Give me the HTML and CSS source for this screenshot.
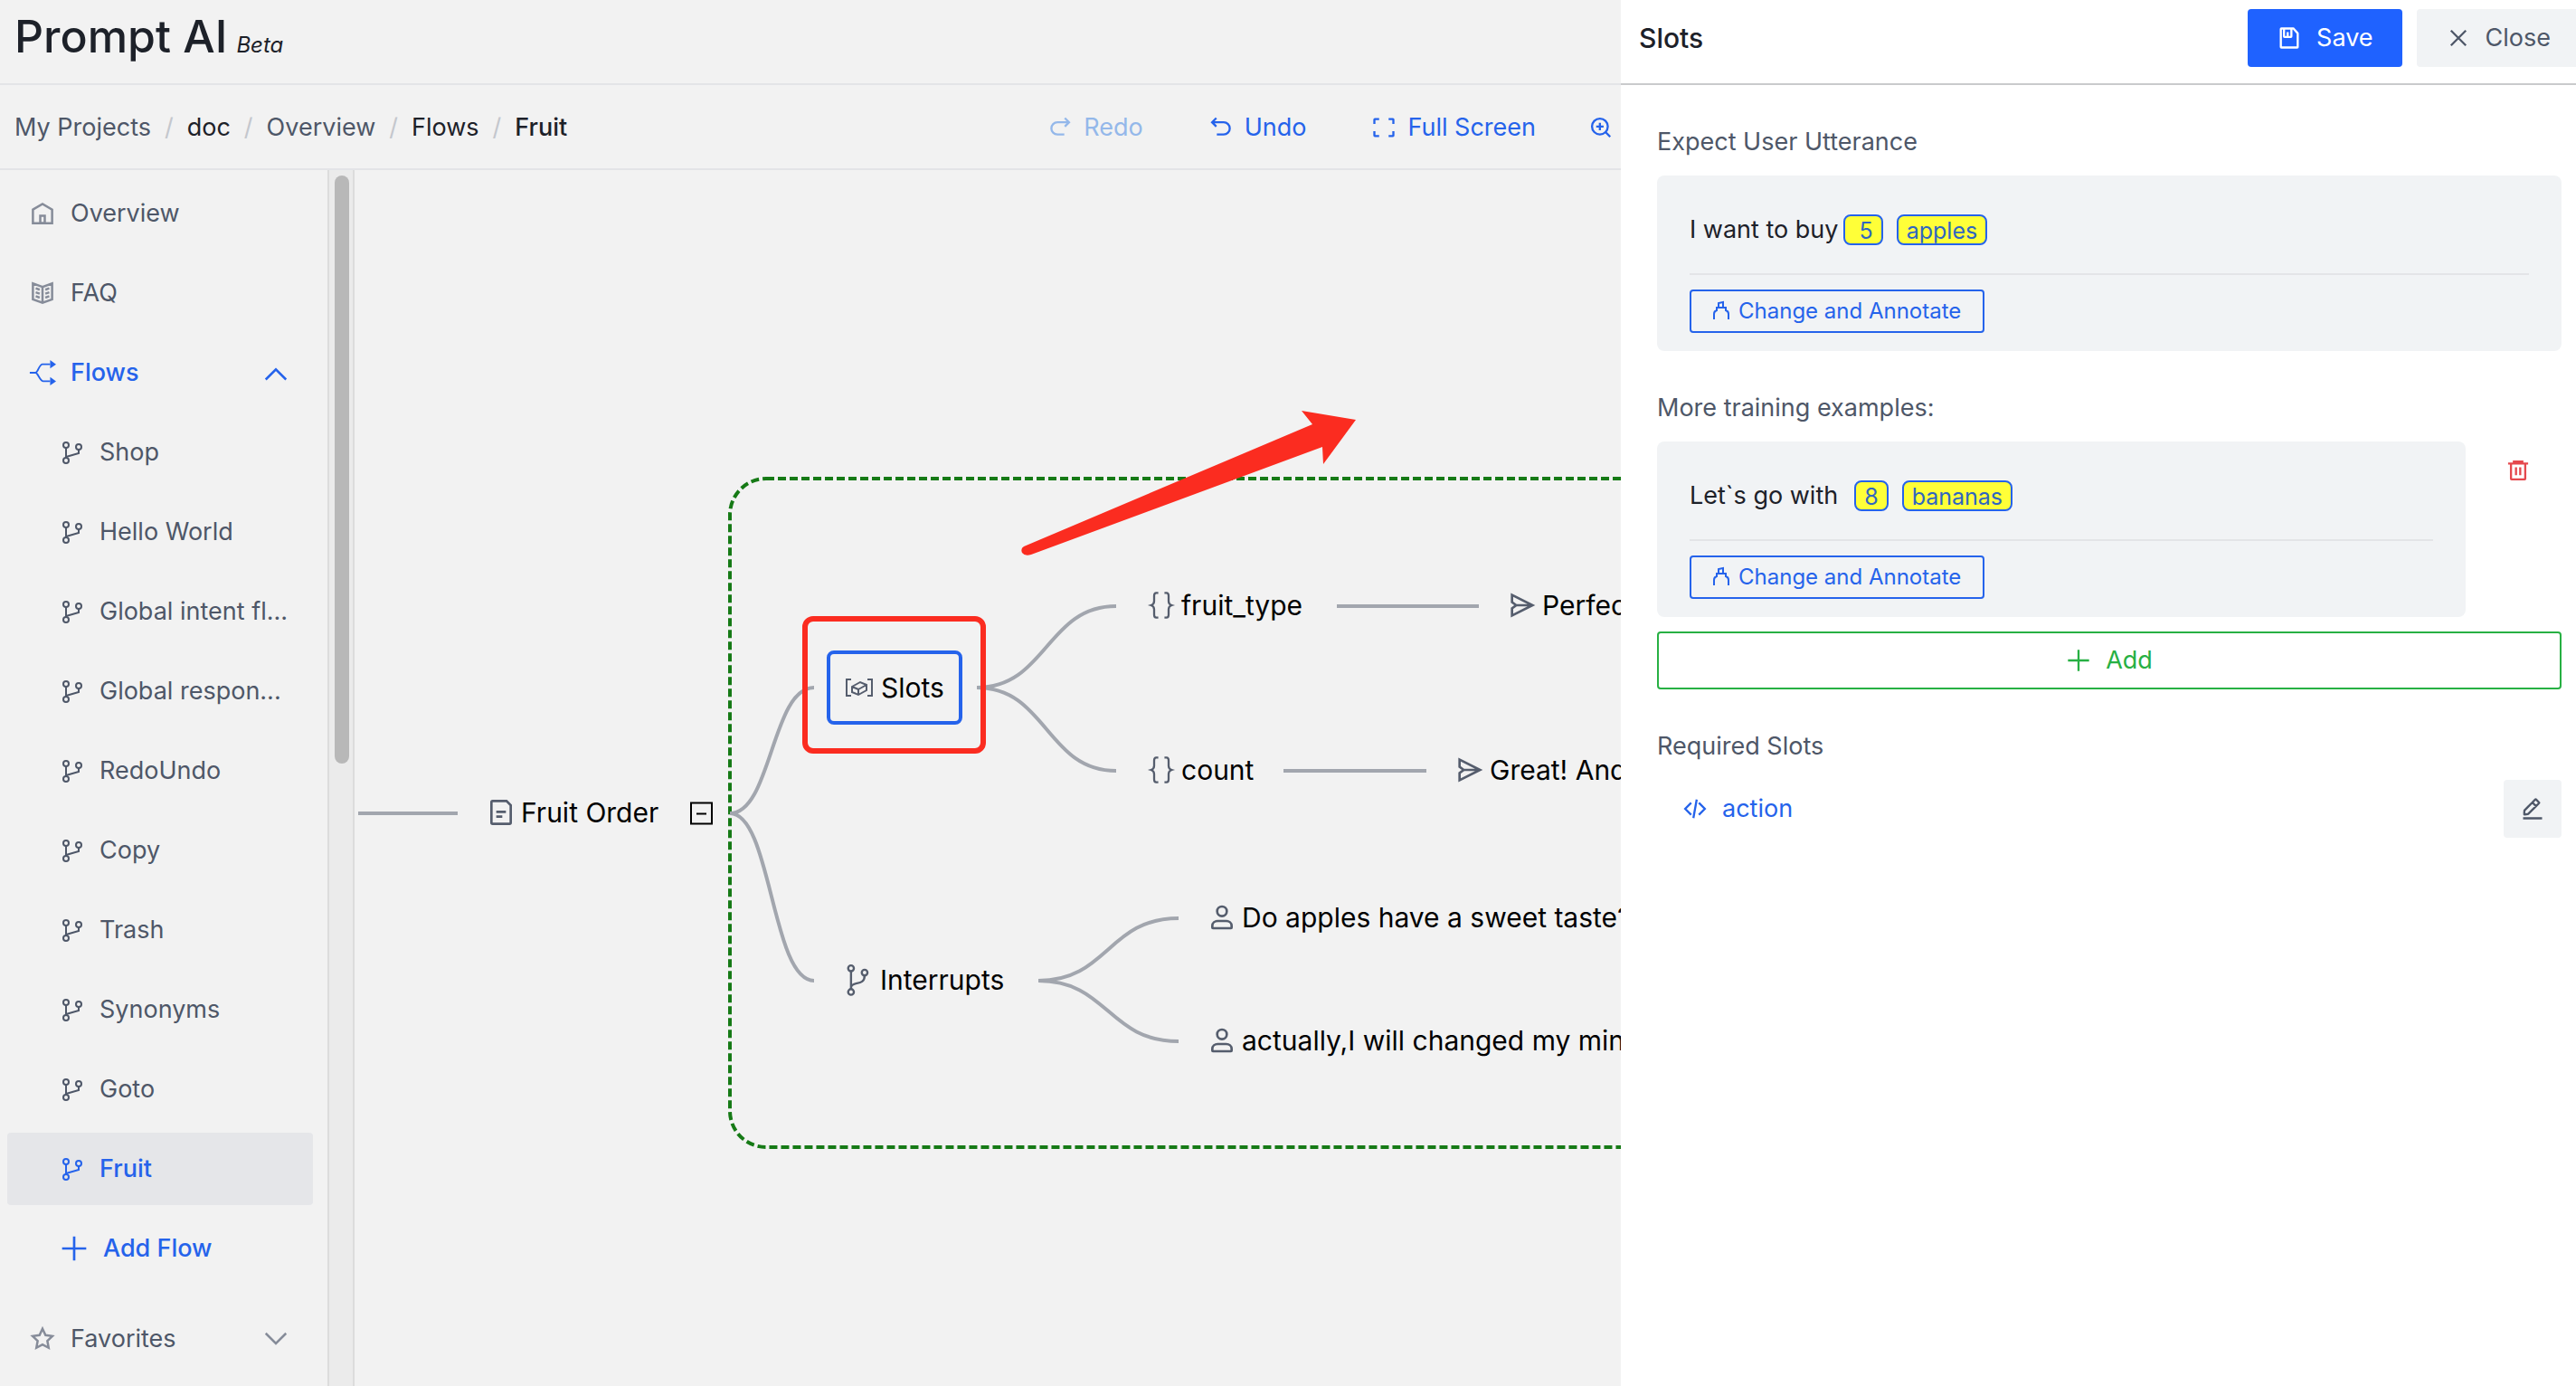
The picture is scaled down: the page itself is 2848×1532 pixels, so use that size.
FILE: index.html
```html
<!DOCTYPE html>
<html lang="en">
<head>
<meta charset="utf-8">
<meta name="viewport" content="width=device-width, initial-scale=1">
<title>Prompt AI</title>
<link rel="stylesheet" href="styles.css">
</head>
<body>
<svg class="sprite" aria-hidden="true">
  <symbol id="home" viewBox="0 0 48 48"><path d="M7 17 24 7l17 10v24H7V17Z"/><path d="M20 28h8v13h-8V28Z"/></symbol>
  <symbol id="book" viewBox="0 0 48 48"><path d="M24 13 7 7v28l17 6 17-6V7l-17 6Zm0 0v27.5M29 18l7-2.5M29 25l7-2.5M29 32l7-2.5M19 18l-7-2.5m7 9.5-7-2.5m7 9.5-7-2.5"/></symbol>
  <symbol id="split" viewBox="0 0 32 32"><path class="thin" d="M1 16h7M8 16C11 15 12 6 16 6h9M8 16c3 1 5 10 9 10h8"/><path class="solid" d="M25 1l7 5-7 5zM25 21l7 5-7 5z"/></symbol>
  <symbol id="branch" viewBox="0 0 28 28"><g class="two"><circle cx="7" cy="6" r="3"/><circle cx="21" cy="8" r="3"/><circle cx="7" cy="23" r="3"/><path d="M7 9v11M21 11v4L7 19"/></g></symbol>
  <symbol id="fork" viewBox="0 0 48 48"><g class="three"><circle cx="15" cy="8" r="4"/><circle cx="34" cy="14" r="4"/><circle cx="15" cy="41" r="4"/><path d="M15 12v25M34 18c0 9-6 10-11 11-5 1-8 3-8 6"/></g></symbol>
  <symbol id="plus" viewBox="0 0 48 48"><path d="M4 24h40M24 4v40"/></symbol>
  <symbol id="star" viewBox="0 0 48 48"><path d="M24 6l5.3 11.2 12.2 1.7-8.9 8.5 2.2 12.2L24 33.7l-10.8 5.9 2.2-12.2-8.9-8.5 12.2-1.7L24 6Z"/></symbol>
  <symbol id="down" viewBox="0 0 48 48"><path d="M42 14 24 32 6 14"/></symbol>
  <symbol id="up" viewBox="0 0 48 48"><path d="M42 36 24 18 6 36"/></symbol>
  <symbol id="undo" viewBox="0 0 48 48"><path d="m15 6-8 8 8 8M8 14h21a11 11 0 0 1 0 23H16"/></symbol>
  <symbol id="redo" viewBox="0 0 48 48"><path d="m33 6 8 8-8 8M40 14H19a11 11 0 0 0 0 23h13"/></symbol>
  <symbol id="full" viewBox="0 0 48 48"><path d="M42 17V9a1 1 0 0 0-1-1h-8M6 17V9a1 1 0 0 1 1-1h8m27 23v8a1 1 0 0 1-1 1h-8M6 31v8a1 1 0 0 0 1 1h8"/></symbol>
  <symbol id="zoomin" viewBox="0 0 48 48"><circle cx="22" cy="22" r="15"/><path d="m32.6 32.6 8.9 8.9M29 22H15m7 7V15"/></symbol>
  <symbol id="save" viewBox="0 0 48 48"><path d="M21 13v9m18 20H9a1 1 0 0 1-1-1V7a1 1 0 0 1 1-1h22.5a1 1 0 0 1 .8.3l7.4 8.4a1 1 0 0 1 .3.7V41a1 1 0 0 1-1 1ZM14 6h14v15a1 1 0 0 1-1 1H15a1 1 0 0 1-1-1V6Z"/></symbol>
  <symbol id="close" viewBox="0 0 48 48"><path d="m9.9 9.9 28.2 28.2M38.1 9.9 9.9 38.1"/></symbol>
  <symbol id="trash" viewBox="0 0 48 48"><path d="M5 11h38M10.500 11v29a1 1 0 0 0 1 1h25a1 1 0 0 0 1-1V11M16 11V7h16v4M20 18v15m8-15v15"/></symbol>
  <symbol id="edit" viewBox="0 0 48 48"><path d="m30.480 19 5.700-5.700a1 1 0 0 0 0-1.400l-5.600-5.600a1 1 0 0 0-1.400 0l-5.700 5.700m7 7L15.760 33.750a1 1 0 0 1-.6.3l-6 .7a1 1 0 0 1-1.100-1.100l.5-6.300a1 1 0 0 1 .3-.6l14.700-14.700m7 7-7-7M6 42h36"/></symbol>
  <symbol id="code" viewBox="0 0 48 48"><path d="M16.700 12.700 5.400 24l11.300 11.300m14.600-22.600L42.600 24 31.300 35.300M27.200 6.300l-6.300 35.400"/></symbol>
  <symbol id="send" viewBox="0 0 48 48"><path d="m14 24-7-5V7l34 17L7 41V29l7-5Zm0 0h25"/></symbol>
  <symbol id="user" viewBox="0 0 48 48"><circle cx="24" cy="14" r="8"/><path d="M8 38c0-5 4-8 9-8h14c5 0 9 3 9 8v3a1 1 0 0 1-1 1H9a1 1 0 0 1-1-1v-3Z"/></symbol>
  <symbol id="file" viewBox="0 0 48 48"><path d="M16 23h16m-16 8h10m12 12H10a2 2 0 0 1-2-2V7a2 2 0 0 1 2-2h23l7 7v29a2 2 0 0 1-2 2Z"/></symbol>
  <symbol id="braces" viewBox="0 0 28 28"><path class="two" d="M11 2H9Q7 2 7 5v5q0 3-3 4 3 1 3 4v5q0 3 2 3h2M17 2h2q2 0 2 3v5q0 3 3 4-3 1-3 4v5q0 3-2 3h-2"/></symbol>
  <symbol id="slot" viewBox="0 0 32 24"><path class="two" d="M7 3H2v18h5M25 3h5v18h-5M8 11l9-5 7 3v6l-9 5-7-3v-6ZM8 11l7 3v6M15 14l9-5"/></symbol>
  <symbol id="pen" viewBox="0 0 18 24"><path class="two" d="M1 21v-6q0-3 3-4V8h10v3q3 1 3 4v6M6 8V3l5-1v6"/></symbol>
</svg>

<div class="app">
  <div class="workspace">
    <header class="brand">
      <h1 class="brand-name">Prompt AI</h1>
      <em class="brand-tag">Beta</em>
    </header>

    <div class="topbar">
      <nav class="crumbs" aria-label="Breadcrumb">
        <a href="#projects">My Projects</a><span class="slash">/</span>
        <a class="dark" href="#doc">doc</a><span class="slash">/</span>
        <a href="#overview">Overview</a><span class="slash">/</span>
        <a class="dark" href="#flows">Flows</a><span class="slash">/</span>
        <span class="current">Fruit</span>
      </nav>
      <div class="tools">
        <button class="tool" disabled><svg class="icon s28"><use href="#redo"/></svg>Redo</button>
        <button class="tool"><svg class="icon s28"><use href="#undo"/></svg>Undo</button>
        <button class="tool"><svg class="icon s28"><use href="#full"/></svg>Full Screen</button>
        <button class="tool" aria-label="Zoom in"><svg class="icon s28"><use href="#zoomin"/></svg></button>
      </div>
    </div>

    <div class="main">
      <nav class="sidebar" aria-label="Project">
        <a class="item" href="#overview"><svg class="icon s30"><use href="#home"/></svg>Overview</a>
        <a class="item" href="#faq"><svg class="icon s30"><use href="#book"/></svg>FAQ</a>
        <button class="item active"><svg class="icon s30"><use href="#split"/></svg>Flows<svg class="icon s30 chevron"><use href="#up"/></svg></button>
        <a class="item sub" href="#shop"><svg class="icon s28"><use href="#branch"/></svg>Shop</a>
        <a class="item sub" href="#hello"><svg class="icon s28"><use href="#branch"/></svg>Hello World</a>
        <a class="item sub" href="#intent"><svg class="icon s28"><use href="#branch"/></svg>Global intent fl...</a>
        <a class="item sub" href="#response"><svg class="icon s28"><use href="#branch"/></svg>Global respon...</a>
        <a class="item sub" href="#redoundo"><svg class="icon s28"><use href="#branch"/></svg>RedoUndo</a>
        <a class="item sub" href="#copy"><svg class="icon s28"><use href="#branch"/></svg>Copy</a>
        <a class="item sub" href="#trash-flow"><svg class="icon s28"><use href="#branch"/></svg>Trash</a>
        <a class="item sub" href="#synonyms"><svg class="icon s28"><use href="#branch"/></svg>Synonyms</a>
        <a class="item sub" href="#goto"><svg class="icon s28"><use href="#branch"/></svg>Goto</a>
        <a class="item sub active selected" href="#fruit" aria-current="page"><svg class="icon s28"><use href="#branch"/></svg>Fruit</a>
        <button class="item sub active"><svg class="icon s32"><use href="#plus"/></svg>Add Flow</button>
        <button class="item favorites"><svg class="icon s30"><use href="#star"/></svg>Favorites<svg class="icon s30 chevron"><use href="#down"/></svg></button>
      </nav>
      <div class="track" aria-hidden="true"><div class="thumb"></div></div>

      <main class="canvas">
        <svg class="links" aria-hidden="true">
          <rect class="group" x="415" y="341" width="1800" height="739" rx="40"/>
          <g class="link">
            <path d="M4 711H114"/>
            <path d="M415 711C461 711 461 572 508 572"/>
            <path d="M415 711C461 711 461 896 508 896"/>
            <path d="M688 572C765 572 765 482 842 482"/>
            <path d="M688 572C765 572 765 664 842 664"/>
            <path d="M1086 482H1243"/>
            <path d="M1027 664H1185"/>
            <path d="M756 896C833 896 833 827 911 827"/>
            <path d="M756 896C833 896 833 963 911 963"/>
          </g>
        </svg>
        <div class="node" style="left:146px;top:710px"><svg class="icon s32"><use href="#file"/></svg>Fruit Order</div>
        <button class="toggle" style="left:371px;top:711px" aria-label="Collapse"></button>
        <div class="node picked" style="left:522px;top:572px"><svg class="icon s32"><use href="#slot"/></svg>Slots</div>
        <div class="node" style="left:876px;top:481px"><svg class="icon s32"><use href="#braces"/></svg>fruit_type</div>
        <div class="node" style="left:876px;top:663px"><svg class="icon s32"><use href="#braces"/></svg>count</div>
        <div class="node" style="left:1275px;top:481px"><svg class="icon s32"><use href="#send"/></svg>Perfect!</div>
        <div class="node" style="left:1217px;top:663px"><svg class="icon s32"><use href="#send"/></svg>Great! And</div>
        <div class="node" style="left:537px;top:895px"><svg class="icon s38"><use href="#fork"/></svg>Interrupts</div>
        <div class="node" style="left:943px;top:826px"><svg class="icon s32"><use href="#user"/></svg>Do apples have a sweet taste?</div>
        <div class="node" style="left:943px;top:962px"><svg class="icon s32"><use href="#user"/></svg>actually,I will changed my mind</div>
        <svg class="links marks" aria-hidden="true">
          <rect class="mark-box" x="498" y="496" width="197" height="146" rx="9"/>
          <path class="mark-arrow" d="M740 416 1059 281 1047 266 1107 276 1071 325 1070 306 748 425Q741 427 738 423 736 418 740 416Z"/>
        </svg>
      </main>
    </div>
  </div>

  <aside class="drawer" aria-label="Slots">
    <header class="drawer-head">
      <h2 class="drawer-title">Slots</h2>
      <button class="btn primary"><svg class="icon s28"><use href="#save"/></svg>Save</button>
      <button class="btn plain"><svg class="icon s28"><use href="#close"/></svg>Close</button>
    </header>
    <div class="drawer-body">
      <h3 class="field">Expect User Utterance</h3>
      <section class="card">
        <p class="utterance">I want to buy<mark class="lead">5</mark><mark>apples</mark></p>
        <button class="annotate"><svg class="icon pen"><use href="#pen"/></svg>Change and Annotate</button>
      </section>

      <h3 class="field">More training examples:</h3>
      <div class="example">
        <section class="card">
          <p class="utterance">Let`s go with<mark class="apart">8</mark><mark>bananas</mark></p>
          <button class="annotate"><svg class="icon pen"><use href="#pen"/></svg>Change and Annotate</button>
        </section>
        <button class="remove" aria-label="Delete example"><svg class="icon s28"><use href="#trash"/></svg></button>
      </div>
      <button class="add"><svg class="icon s28"><use href="#plus"/></svg>Add</button>

      <h3 class="field">Required Slots</h3>
      <div class="slot-row">
        <a class="slot-link" href="#action"><svg class="icon s28"><use href="#code"/></svg>action</a>
        <button class="edit" aria-label="Edit slots"><svg class="icon s28"><use href="#edit"/></svg></button>
      </div>
    </div>
  </aside>
</div>
</body>
</html>
```
FILE: styles.css
```css
:root {
  --blue: #2563eb;
  --gray: #4e5768;
  --line: #e3e4e7;
}

* { box-sizing: border-box; }

body {
  margin: 0;
  background: #f2f2f2;
  color: #1d2129;
  font: 27px/40px Inter, "Liberation Sans", sans-serif;
}

h1, h2, h3, p { margin: 0; font-weight: 400; }
a { color: inherit; text-decoration: none; }
button {
  margin: 0;
  padding: 0;
  border: 0;
  background: none;
  color: inherit;
  font: inherit;
  cursor: pointer;
}

.sprite { position: absolute; width: 0; height: 0; }
.icon { flex: none; fill: none; stroke: currentColor; stroke-width: 4; }
.s28 { width: 28px; height: 28px; }
.s30 { width: 30px; height: 30px; }
.s32 { width: 32px; height: 32px; }
.s38 { width: 38px; height: 38px; }
.thin { stroke-width: 2; }
.two { stroke-width: 2; }
.three { stroke-width: 3; }
.solid { fill: currentColor; stroke: none; }

.app { display: flex; min-height: 100vh; }
.workspace { flex: 1; min-width: 0; display: flex; flex-direction: column; }

/* Brand and breadcrumb bars */
.brand {
  display: flex;
  align-items: baseline;
  gap: 10px;
  height: 94px;
  padding: 8px 16px;
  border-bottom: 2px solid var(--line);
}
.brand-name { font-size: 50px; line-height: 64px; font-weight: 500; }
.brand-tag { font-size: 24px; }

.topbar {
  display: flex;
  align-items: center;
  justify-content: space-between;
  height: 94px;
  padding: 2px 8px 0 16px;
  border-bottom: 2px solid var(--line);
  white-space: nowrap;
}
.crumbs { display: flex; gap: 15px; color: var(--gray); }
.dark { color: #1d2129; }
.current { color: #1d2129; font-weight: 500; }
.slash { color: #c4c7cd; }
.tools { display: flex; gap: 72px; color: var(--blue); }
.tool { display: flex; align-items: center; gap: 12px; }
.tool:disabled { color: #94b8ea; }
.tool:last-child { margin-left: -14px; }

/* Sidebar */
.main { flex: 1; display: flex; min-height: 0; }
.sidebar {
  flex: none;
  width: 362px;
  padding: 8px 16px 8px 8px;
  display: flex;
  flex-direction: column;
  gap: 8px;
}
.item {
  display: flex;
  align-items: center;
  gap: 16px;
  height: 80px;
  padding: 0 26px 0 24px;
  border-radius: 4px;
  color: var(--gray);
  white-space: nowrap;
}
.item > .icon { color: #868c99; }
.item.sub { padding-left: 58px; gap: 16px; }
.item.sub > .icon { color: inherit; }
.item.active, .item.active > .icon { color: var(--blue); font-weight: 500; }
.item.selected { background: #e5e6e9; }
.chevron { margin-left: auto; }
.favorites { margin-top: 12px; }
.track {
  flex: none;
  width: 30px;
  padding: 6px;
  background: #ebebeb;
  border: solid #dcdcdc;
  border-width: 0 2px;
}
.thumb { width: 16px; height: 650px; border-radius: 8px; background: #b8b8b8; }

/* Flow diagram */
.canvas { flex: 1; position: relative; overflow: hidden; color: #000; }
.links { position: absolute; inset: 0; width: 100%; height: 100%; }
.marks { pointer-events: none; }
.link { fill: none; stroke: #a2a6ae; stroke-width: 4; }
.group { fill: none; stroke: #167a16; stroke-width: 4; stroke-dasharray: 9 4; }
.mark-box { fill: none; stroke: #fb2c20; stroke-width: 6; }
.mark-arrow { fill: #fb2c20; }
.node {
  position: absolute;
  display: flex;
  align-items: center;
  gap: 6px;
  font-size: 30px;
  white-space: nowrap;
  transform: translateY(-50%);
}
.node > .icon { color: #555d6d; }
.picked { gap: 8px; padding: 16px; border: 4px solid var(--blue); border-radius: 8px; height: 82px; }
.toggle {
  position: absolute;
  width: 25px;
  height: 25px;
  border: 2px solid #000;
  background: linear-gradient(#000, #000) center / 11px 2px no-repeat;
  transform: translateY(-50%);
}

/* Slots drawer */
.drawer { flex: none; width: 1056px; background: #fff; }
.drawer-head {
  display: flex;
  gap: 16px;
  height: 94px;
  padding: 10px 0 0 20px;
  border-bottom: 2px solid #c9cacc;
}
.drawer-title { flex: 1; font-size: 30px; line-height: 64px; font-weight: 500; }
.btn {
  display: flex;
  align-items: center;
  gap: 16px;
  height: 64px;
  padding: 0 32px;
  border-radius: 4px;
}
.primary { background: #1f62ff; color: #fff; }
.plain { background: #f1f3f5; color: var(--gray); border-radius: 4px 0 0 4px; padding-right: 28px; }

.drawer-body { padding: 43px 16px 0 40px; }
.field { font-size: 27px; line-height: 40px; color: var(--gray); margin-bottom: 17px; }
.card {
  flex: 1;
  padding: 20px 36px;
  border-radius: 8px;
  background: #f1f3f5;
}
.card + .field, .add + .field { margin-top: 43px; }
.utterance {
  display: flex;
  align-items: center;
  height: 90px;
  margin-bottom: 16px;
  padding-bottom: 8px;
  border-bottom: 2px solid var(--line);
}
.utterance mark {
  height: 34px;
  margin-right: 15px;
  padding: 0 9px;
  border: 2px solid var(--blue);
  border-radius: 8px;
  background: #ffff38;
  color: #2f66c0;
  font-size: 25px;
  line-height: 32px;
}
.utterance .lead { margin-left: 5px; padding-left: 16px; }
.utterance .apart { margin-left: 18px; }
.annotate {
  display: flex;
  align-items: center;
  gap: 10px;
  height: 48px;
  padding: 0 24px;
  border: 2px solid var(--blue);
  border-radius: 4px;
  color: var(--blue);
  font-size: 24px;
}
.pen { width: 18px; height: 24px; }
.example { display: flex; align-items: flex-start; gap: 26px; }
.remove { display: flex; margin-right: 16px; padding: 18px; color: #e5484d; }
.add {
  display: flex;
  align-items: center;
  justify-content: center;
  gap: 16px;
  width: 100%;
  height: 64px;
  margin-top: 16px;
  border: 2px solid #27b043;
  border-radius: 4px;
  color: #27b043;
}
.slot-row { display: flex; align-items: center; justify-content: space-between; }
.slot-link { display: flex; align-items: center; gap: 16px; padding-left: 28px; color: var(--blue); }
.edit {
  display: grid;
  place-items: center;
  width: 64px;
  height: 64px;
  border-radius: 4px;
  background: #f1f3f5;
  color: var(--gray);
}
```
